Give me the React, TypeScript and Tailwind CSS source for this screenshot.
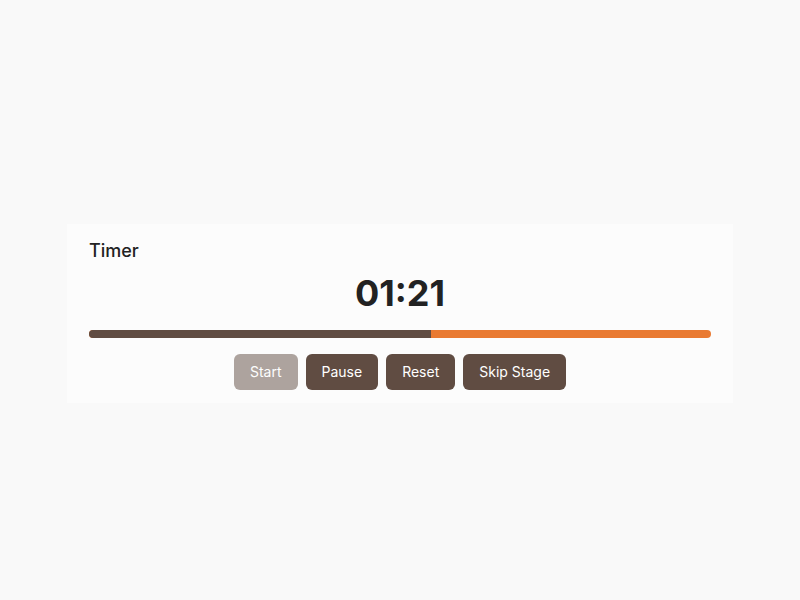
import React from "react";

export default function App() {
  const progress = 0.55;
  return (
    <div className="min-h-screen w-full bg-[#f9f9f9] flex items-center justify-center pt-[27px]" style={{ fontFamily: "Inter, 'Noto Sans', sans-serif" }}>
      <div className="w-[666px] bg-[#fcfcfc] px-[22px] pt-[13px] pb-[13px] flex flex-col">
        <div className="text-lg leading-7 font-medium text-[#222222]">Timer</div>
        <div className="mt-[8px] text-4xl leading-10 font-bold text-[#222222] text-center">01:21</div>
        <div className="mt-[17px] h-2 w-full rounded-full bg-[#e97a32] overflow-hidden flex">
          <div className="h-full bg-[#604c42]" style={{ width: `${progress * 100}%` }} />
        </div>
        <div className="mt-4 flex justify-center gap-2">
          <button className="h-9 px-4 rounded-md bg-[#604c42] opacity-50 text-white text-sm">Start</button>
          <button className="h-9 px-4 rounded-md bg-[#604c42] text-white text-sm">Pause</button>
          <button className="h-9 px-4 rounded-md bg-[#604c42] text-white text-sm">Reset</button>
          <button className="h-9 px-4 rounded-md bg-[#604c42] text-white text-sm">Skip Stage</button>
        </div>
      </div>
    </div>
  );
}
